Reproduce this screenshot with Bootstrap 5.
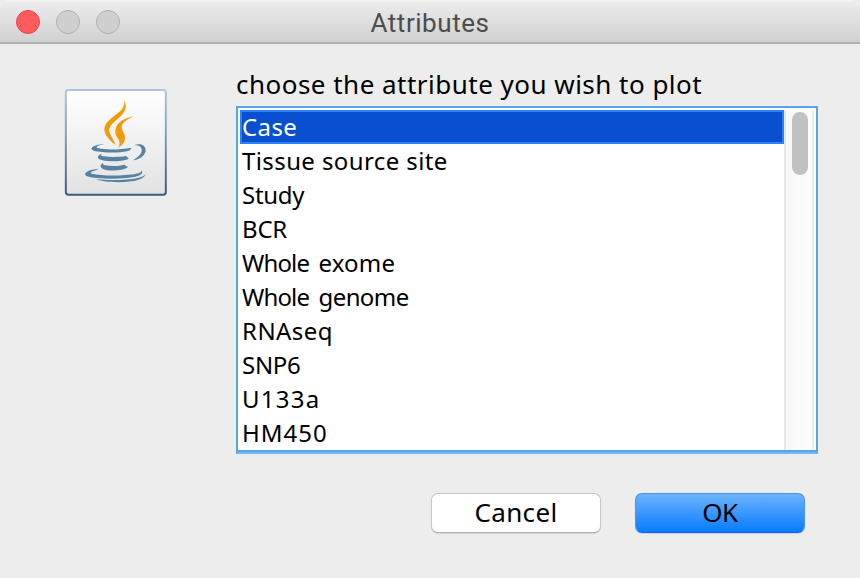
<!DOCTYPE html>
<html lang="en">
<head>
<meta charset="utf-8">
<title>Attributes</title>
<link href="https://cdn.jsdelivr.net/npm/bootstrap@5.3.0/dist/css/bootstrap.min.css" rel="stylesheet">
<style>
body{width:860px;height:578px;overflow:hidden;background:#ededed;color:#000;font-family:"Noto Sans",sans-serif}
.win-title{height:44px;background:linear-gradient(#f5f5f5 0,#ebebeb 3px,#d1d1d1 42px);border-bottom:2px solid #b1b1b1;border-radius:9px 9px 0 0;font:26px/46px Roboto,sans-serif;letter-spacing:.55px;color:#4d4d4d}
.lights{left:16px;top:10px;gap:16px}
.light{width:24px;height:24px;border-radius:50%;background:#cfcfcf;border:1px solid #b0b0b0}
.light-close{background:#ff5b5e;border-color:#e8474c}
.icon-col{width:236px;padding:44px 0 0 64px}
.icon-col svg{display:block}
.prompt{height:62px;padding:21px 0 0 0;font-size:26px;line-height:38px;letter-spacing:.48px;white-space:nowrap}
.chooser{width:582px;height:348px;border:2px solid #55a6ea;box-shadow:inset 0 -2px #55a6ea;border-bottom-color:#6fb8fb;background:#fff;padding:2px 2px 2px 2px}
.opts{width:544px;height:340px;overflow:hidden}
.opt{height:34px;padding-left:2px;font-size:24px;line-height:34px;white-space:nowrap}
.opt.chosen{background:#0850d0;color:#fff;box-shadow:inset 0 0 0 2px #2b80fb}
.track{width:30px;height:340px;background:linear-gradient(90deg,#f8f8f8,#fcfcfc);border-left:2px solid #e7e7e7;border-right:2px solid #ebebeb;padding:2px 0 0 6px}
.thumb{width:16px;height:63px;border-radius:8px;background:#c1c1c1}
.actions{padding:39px 55px 0 0;gap:34px}
.actions .btn{width:170px;height:40px;padding:0 0 2px;border-radius:7px;font-size:26px;line-height:36px;color:#000}
.btn-plain{background:#fff;border:1px solid #c6c6c6;border-bottom-color:#b0b0b0;letter-spacing:.35px;box-shadow:0 1px 1px rgba(0,0,0,.1)}
.btn-main{background:linear-gradient(#6fb5fb,#067aff) border-box;border:1px solid #4296f0;border-bottom-color:#0566f5;letter-spacing:-.4px;box-shadow:0 1px 1px rgba(0,0,0,.12)}
.t1{letter-spacing:.4px}.t2{letter-spacing:.4px}.t3{letter-spacing:-.3px}.t4{letter-spacing:-.2px}
.t5{letter-spacing:.15px}.t6{letter-spacing:-.6px}.tight{letter-spacing:-.85px;word-spacing:4px}.t7{letter-spacing:.45px}.t8{letter-spacing:-.3px}.t9{letter-spacing:1.25px}.t10{letter-spacing:1px}
</style>
</head>
<body>
<header class="win-title text-center position-relative">Attributes
<div class="lights d-flex position-absolute"><span class="light light-close"></span><span class="light"></span><span class="light"></span></div>
</header>
<main class="d-flex">
<div class="icon-col flex-shrink-0">
<svg width="104" height="108" viewBox="27 23 312 324">
<defs>
<linearGradient id="edge" x1="0" y1="0" x2="0" y2="1"><stop offset="0" stop-color="#b0c4de"/><stop offset=".5" stop-color="#7e98b3"/><stop offset="1" stop-color="#3d5c7b"/></linearGradient>
<linearGradient id="face" x1="0" y1="0" x2="0" y2="1"><stop offset="0" stop-color="#fff"/><stop offset="1" stop-color="#e2e2e2"/></linearGradient>
</defs>
<rect x="32.5" y="29" width="300" height="314" rx="8" fill="url(#face)" stroke="url(#edge)" stroke-width="6"/>
<g fill="#f39a0b">
<path d="M207 59C219 82 209 98 192 112C169 131 157 143 165 160C169 170 178 180 181 193C165 181 147 163 148 145C150 121 184 105 199 89C208 79 209 70 207 59Z"/>
<path d="M236 108C211 119 200 130 200 141C200 153 211 160 210 174C209 187 201 195 190 202C195 191 195 184 190 176C184 167 179 158 182 145C187 123 212 113 236 108Z"/>
</g>
<g fill="#5882a2">
<path d="M149 191C128 195 117 201 132 204C153 210 201 207 230 202L223 211C193 219 129 218 113 210C101 202 121 192 149 191Z"/>
<path d="M237 195C252 188 271 193 272 208C272 226 253 238 233 240C249 231 261 221 260 208C259 196 248 195 237 195Z"/>
<path d="M142 221C136 224 138 227 147 228C168 231 195 230 213 227L222 235C199 245 149 245 133 237C124 230 131 223 142 221Z"/>
<path d="M147 248C141 251 145 254 152 255C170 258 193 257 208 253L219 261C200 273 158 273 142 265C133 258 137 250 147 248Z"/>
<path d="M132 266C115 272 99 277 111 280C144 288 210 286 244 280C258 277 262 274 258 269C267 276 260 283 248 287C210 298 125 298 95 287C80 278 107 265 132 266Z"/>
<path d="M272 281C270 292 252 300 231 303C194 308 147 306 123 297C164 301 217 300 248 293C260 290 268 287 272 281Z"/>
</g>
</svg>
</div>
<section>
<div class="prompt">choose the attribute you wish to plot</div>
<div class="chooser d-flex">
<div class="opts">
<div class="opt chosen t1">Case</div>
<div class="opt t2">Tissue source site</div>
<div class="opt t3">Study</div>
<div class="opt t4">BCR</div>
<div class="opt t5"><span class="tight">Whole </span>exome</div>
<div class="opt t6"><span class="tight">Whole </span>genome</div>
<div class="opt t7">RNAseq</div>
<div class="opt t8">SNP6</div>
<div class="opt t9">U133a</div>
<div class="opt t10">HM450</div>
</div>
<div class="track"><div class="thumb"></div></div>
</div>
</section>
</main>
<footer class="actions d-flex justify-content-end">
<button type="button" class="btn btn-plain">Cancel</button>
<button type="button" class="btn btn-main">OK</button>
</footer>
<script src="https://cdn.jsdelivr.net/npm/bootstrap@5.3.0/dist/js/bootstrap.bundle.min.js"></script>
</body>
</html>
